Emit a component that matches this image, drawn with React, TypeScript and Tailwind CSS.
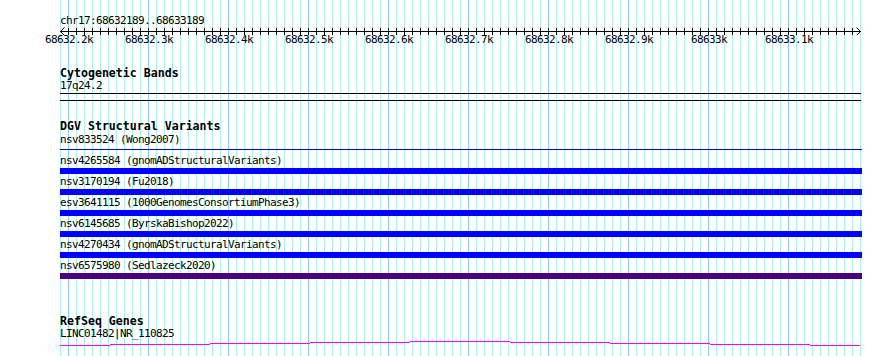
const minor = Array.from({ length: 101 }, (_, i) => 60 + i * 8)
const major = Array.from({ length: 10 }, (_, i) => 68 + i * 80)
const ticks = Array.from({ length: 100 }, (_, i) => 68 + i * 8).filter((x) => x < 858)
const labels = [
  '68632.2k',
  '68632.3k',
  '68632.4k',
  '68632.5k',
  '68632.6k',
  '68632.7k',
  '68632.8k',
  '68632.9k',
  '68633k',
  '68633.1k',
]

const variants = [
  { name: 'nsv4265584 (gnomADStructuralVariants)', color: 'bg-[#0000ff]' },
  { name: 'nsv3170194 (Fu2018)', color: 'bg-[#0000ff]' },
  { name: 'esv3641115 (1000GenomesConsortiumPhase3)', color: 'bg-[#0000ff]' },
  { name: 'nsv6145685 (ByrskaBishop2022)', color: 'bg-[#0000ff]' },
  { name: 'nsv4270434 (gnomADStructuralVariants)', color: 'bg-[#0000ff]' },
  { name: 'nsv6575980 (Sedlazeck2020)', color: 'bg-[#4b0082]' },
]

// intron line of the gene, drawn in small steps
const geneSteps = [60, 110, 210, 310, 410, 510, 610, 710, 810, 860]
const geneYs = [6, 5, 4, 3, 2, 3, 4, 5, 6]

function Grid() {
  return (
    <svg className="pointer-events-none absolute inset-0" width={890} height={356}>
      {minor.map((x) => (
        <rect key={x} x={x} y={0} width={1} height={356} fill="#afeeee" />
      ))}
      {major.map((x) => (
        <rect key={x} x={x} y={0} width={1} height={356} fill="#87cefa" />
      ))}
    </svg>
  )
}

function Ruler() {
  return (
    <svg className="-ml-[60px] block" width={890} height={9}>
      <rect x={60} y={5} width={801} height={1} fill="#000" />
      {ticks.map((x) => (
        <rect key={x} x={x} y={2} width={1} height={7} fill="#000" />
      ))}
      <path d="M64.5 1.5 L60.5 5.5 L64.5 9.5" stroke="#000" fill="none" />
      <path d="M856.5 1.5 L860.5 5.5 L856.5 9.5" stroke="#000" fill="none" />
    </svg>
  )
}

function Label({ children }: { children: string }) {
  return (
    <div className="h-[10px] text-[11px] leading-[10px] tracking-[-0.62px] whitespace-pre">
      {children}
    </div>
  )
}

function Title({ children }: { children: string }) {
  return (
    <div className="h-[12px] text-[11.6px] font-bold leading-[11px] tracking-[0px] whitespace-pre">
      {children}
    </div>
  )
}

export default function App() {
  return (
    <div className="relative h-[356px] w-[890px] overflow-hidden bg-white font-['DejaVu_Sans_Mono',monospace] text-black">
      <Grid />
      <div className="relative pl-[60px] pt-[16px]">
        <Label>chr17:68632189..68633189</Label>
        <Ruler />
        <div className="-ml-[31px] flex h-[10px]">
          {labels.map((l) => (
            <div
              key={l}
              className="w-[80px] shrink-0 text-center text-[11px] leading-[10px] tracking-[-0.62px]"
            >
              {l}
            </div>
          ))}
        </div>

        <div className="mt-[23px]">
          <Title>Cytogenetic Bands</Title>
        </div>
        <div className="mt-[1px]">
          <Label>17q24.2</Label>
        </div>
        <div className="mt-[2px] h-[8px] w-[801px] border-y border-black" />

        <div className="mt-[20px]">
          <Title>DGV Structural Variants</Title>
        </div>
        <div className="mt-[2px]">
          <Label>nsv833524 (Wong2007)</Label>
        </div>
        <div className="mt-[4px] h-[1px] w-[802px] bg-[#0000cd]" />

        <div className="flex flex-col gap-[3px] pt-[6px]">
          {variants.map((v) => (
            <div key={v.name} className="flex flex-col gap-[2px]">
              <Label>{v.name}</Label>
              <div className={`h-[6px] w-[802px] ${v.color}`} />
            </div>
          ))}
        </div>

        <div className="mt-[37px]">
          <Title>RefSeq Genes</Title>
        </div>
        <div className="mt-[1px]">
          <Label>LINC01482|NR_110825</Label>
        </div>
        <svg className="-ml-[60px] block" width={890} height={10}>
          {geneYs.map((y, i) => (
            <rect
              key={i}
              x={geneSteps[i]}
              y={y}
              width={geneSteps[i + 1] - geneSteps[i]}
              height={1}
              fill="#ff00ff"
            />
          ))}
        </svg>
      </div>
    </div>
  )
}
